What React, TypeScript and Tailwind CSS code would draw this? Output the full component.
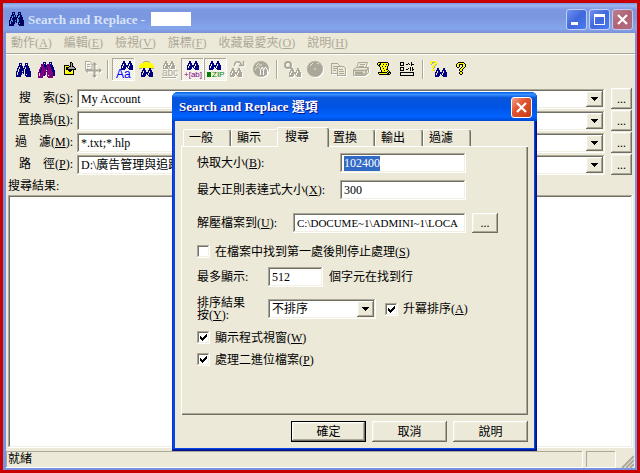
import React, { useEffect, useRef } from "react";
import clsx from "clsx";

const raised = "bg-[#ece9d8] shadow-[inset_-1px_-1px_#716f64,inset_1px_1px_#fff,inset_-2px_-2px_#aca899,inset_2px_2px_#f1efe2]";
const sunken = "bg-white shadow-[inset_-1px_-1px_#fff,inset_1px_1px_#aca899,inset_-2px_-2px_#f1efe2,inset_2px_2px_#716f64]";

const NAVY = "#000080";
const GRAY = "#aca899";

const BIG = [
  "...XXX...XXX...",
  "...X.X...X.X...",
  "...XXX...XXX...",
  "..XXXXX.XXXXX..",
  "..X.XXX.X.XXX..",
  ".XX.XXXXX.XXXX.",
  ".X.XXXXX.XXXXX.",
  ".X.XXXXX.XXXXX.",
  "XX.XXX.X.XXXXXX",
  "X.XXXXXX.XXXXXX",
  "X.XXXX.X.XXXXXX",
  "X.XXXX...X.XXXX",
  "XXXXX....XXXXXX",
  "XXXXX.....XXXXX",
];

const SMALL = [
  "..XX....XX..",
  "..XX....XX..",
  ".XXXX..XXXX.",
  ".X.XX..X.XX.",
  "XX.XXXXX.XXX",
  "X.XXXXX.XXXX",
  "X.XXX.X.XXXX",
  "XXXXX..XXXXX",
  "XXXX....XXXX",
];

const QUESTION = [
  "..kkkkkk..",
  ".kyyyyyyk.",
  "kyykkkkyyk",
  "kyyk..kyyk",
  "kyyk..kyyk",
  ".kk..kyyk.",
  "....kyyk..",
  "...kyyk...",
  "...kyyk...",
  "....kk....",
  "...kyyk...",
  "...kyyk...",
  "....kk....",
];

const QUESTION_SMALL = [
  ".yyyyy.",
  "yygggyy",
  "yyg..yy",
  ".g..yyg",
  "...yyg.",
  "..yyg..",
  "..yyg..",
  "...g...",
  "..yy...",
  "..yyg..",
];

const SCROLL = [
  ".kkkkkkkkkk...",
  "kyykyyyyyyyk..",
  "kykkyykyykyk..",
  ".kkyyyyyyyyk..",
  "..kyykyykyk...",
  "...kyyyyyyk...",
  "...kyykyyyk...",
  "...kyyyyykk...",
  "....kyykyyyk..",
  "....kyyyyykyk.",
  ".kkkkkkkkkykkk",
  ".kyyyyyyyykkyk",
  "..kkkkkkkkkkk.",
];

const PAGE_PIN = [
  "......kk....",
  "......kwk...",
  "......kwk...",
  "kkkkk.kwk...",
  "kyyyykkwkk..",
  "kykkkwwwwwk.",
  "kykkwwwwwwwk",
  "kykkkkkkkkkk",
  "kyyykkkkyk..",
  "kyyyykkyyk..",
  "kyyyyyyyyk..",
  "kyyyyyyyyk..",
  "kkkkkkkkkk..",
];

const WHOLE_WORD = [
  ".....ggggg.....",
  "....gyyyyyg....",
  "..yyyyyyyyyyy..",
  ".yyyyyyyyyyyyy.",
  "yyyyyyyyyyyyyyy",
  "yyyyyyyyyyyyyyy",
  "yyyyyyyyyyyyyyy",
  "ggg.........ggg",
];

const COLORS: Record<string, string> = { k: "#000", y: "#ffff00", w: "#a8a8a0", g: "#aca880" };

interface PixelsProps {
  rows: string[];
  x?: number;
  y?: number;
  color?: string;
}

const Pixels: React.FC<PixelsProps> = ({ rows, x = 0, y = 0, color = "#000" }) => (
  <g shapeRendering="crispEdges">
    {rows.flatMap((row, j) =>
      [...row].map((c, i) =>
        c === "." ? null : <rect key={`${i}-${j}`} x={x + i} y={y + j} width="1" height="1" fill={COLORS[c] ?? color} />
      )
    )}
  </g>
);

// disabled glyphs get a white copy one pixel down and right
const Etched: React.FC<{ children: (color: string) => React.ReactNode }> = ({ children }) => (
  <>
    <g transform="translate(1 1)">{children("#fff")}</g>
    {children(GRAY)}
  </>
);

const Caption: React.FC<{ x: number; y: number; color: string; size?: number; children: string }> = ({ x, y, color, size = 9, children }) => (
  <text x={x} y={y} fill={color} fontSize={size} fontFamily="Liberation Sans, sans-serif">{children}</text>
);

interface Tool {
  name: string;
  pressed?: boolean;
  disabled?: boolean;
  icon: React.ReactNode;
}

const groups: Tool[][] = [
  [
    { name: "Search", icon: <Pixels rows={BIG} x={4} y={5} color={NAVY} /> },
    {
      name: "Replace",
      icon: <><Pixels rows={BIG} x={5} y={4} color={NAVY} /><Pixels rows={BIG} x={3} y={6} color="#800080" /></>,
    },
    { name: "Open", icon: <Pixels rows={PAGE_PIN} x={6} y={4} /> },
    {
      name: "Move",
      disabled: true,
      icon: (
        <Etched>
          {(c) => (
            <g fill="none" stroke={c}>
              <path d="M4 3.5h5l2 2v6H4.5v-8M6 6.5h3M6 8.5h3" />
              <path d="M13.5 5v14M6 12.5h14" strokeWidth="2" />
              <path d="M11 7l2.5-3L16 7zM11 17l2.5 3 2.5-3zM7 10l-3 2.5L7 15zM18 10l3 2.5-3 2.5z" fill={c} stroke="none" />
            </g>
          )}
        </Etched>
      ),
    },
  ],
  [
    {
      name: "Case sensitive",
      pressed: true,
      icon: <><Pixels rows={SMALL} x={9} y={3} color={NAVY} /><Caption x={4} y={20} size={12} color="#0000ff">Aa</Caption></>,
    },
    {
      name: "Whole word",
      icon: <><Pixels rows={WHOLE_WORD} x={4} y={3} /><Pixels rows={SMALL} x={6} y={10} color={NAVY} /></>,
    },
    {
      name: "Regular expression",
      disabled: true,
      icon: (
        <Etched>
          {(c) => (
            <>
              <Pixels rows={SMALL.slice(0, 8)} x={5} y={3} color={c} />
              <Caption x={4} y={18} size={10} color={c}>abc</Caption>
              <path d="M4 19.5h14" stroke={c} />
            </>
          )}
        </Etched>
      ),
    },
    {
      name: "Expression replace",
      pressed: true,
      icon: <><Pixels rows={SMALL} x={6} y={3} color={NAVY} /><Caption x={3} y={19} size={8} color="#800080">+[ab]</Caption></>,
    },
    {
      name: "Search ZIP",
      pressed: true,
      icon: (
        <>
          <Pixels rows={SMALL} x={5} y={3} color={NAVY} />
          <path d="M3 14h4v5H3z" fill="#008000" />
          <Caption x={8} y={19} size={8} color="#008000">ZIP</Caption>
        </>
      ),
    },
    {
      name: "Subfolders",
      disabled: true,
      icon: (
        <Etched>
          {(c) => (
            <>
              <Pixels rows={SMALL} x={3} y={10} color={c} />
              <path d="M7.5 8c0-6 6-5 7-1M16.5 3v4.5H12" fill="none" stroke={c} strokeWidth="1.5" />
            </>
          )}
        </Etched>
      ),
    },
    {
      name: "HTML",
      disabled: true,
      icon: (
        <>
          <circle cx="12" cy="12" r="8" fill="#fff" />
          <circle cx="11" cy="11" r="8" fill={GRAY} />
          <path d="M6 8l3-3M9 7h3M5 12c2-4 4-4 5-1" fill="none" stroke="#ece9d8" />
          <path d="M10.5 17v-5l2-3 1 3 2-3 2 3v5M13.5 12v5" fill="none" stroke="#fff" />
        </>
      ),
    },
  ],
  [
    {
      name: "Find next",
      disabled: true,
      icon: (
        <Etched>
          {(c) => (
            <>
              <circle cx="7" cy="7" r="3" fill="none" stroke={c} strokeWidth="2" />
              <path d="M9 9l3 3" stroke={c} strokeWidth="2" />
              <Pixels rows={SMALL} x={8} y={10} color={c} />
            </>
          )}
        </Etched>
      ),
    },
    {
      name: "Stop",
      disabled: true,
      icon: (
        <>
          <circle cx="12" cy="12" r="8" fill="#fff" />
          <circle cx="11" cy="11" r="8" fill={GRAY} />
          <path d="M6 8l3-3M13 5l2 1M10 11h2" stroke="#ece9d8" />
        </>
      ),
    },
    {
      name: "Copy",
      disabled: true,
      icon: (
        <Etched>
          {(c) => (
            <g fill="#ece9d8" stroke={c} shapeRendering="crispEdges">
              <path d="M4.5 5.5h6l2 2v8h-8z" />
              <path d="M6 8.5h4M6 10.5h4M6 12.5h3" />
              <path d="M10.5 8.5h6l2 2v7h-8z" />
              <path d="M12 11.5h4M12 13.5h5M12 15.5h5" />
            </g>
          )}
        </Etched>
      ),
    },
    {
      name: "Print",
      disabled: true,
      icon: (
        <Etched>
          {(c) => (
            <g fill="#ece9d8" stroke={c}>
              <path d="M8.5 4.5h9l-2 6h-9zM10 6.5h5M9 8.5h5" />
              <path d="M3.5 11.5l3-2h12v5l-3 3h-12z" />
              <path d="M4 12.5h12l2-2M16 13v4M5 14.5h8M5 16h10" strokeWidth="1.5" />
            </g>
          )}
        </Etched>
      ),
    },
    { name: "Script", icon: <Pixels rows={SCROLL} x={4} y={4} /> },
    {
      name: "Options",
      icon: (
        <g fill="none" stroke="#000" shapeRendering="crispEdges">
          <path d="M4.5 4.5h3v3h-3zM4.5 9.5h3v3h-3zM4.5 14.5h13v3h-13z" />
          <path d="M10 6.5h2M12 5.5h1M13 6.5h1M15 4v4M16 6.5h2M10 11.5h2M12 10.5h1M14 9v4M16 9v4M17 11.5h1" />
        </g>
      ),
    },
  ],
  [
    {
      name: "Search help",
      icon: <><Pixels rows={QUESTION_SMALL} x={3} y={3} /><Pixels rows={SMALL} x={8} y={10} color={NAVY} /></>,
    },
    { name: "Help", icon: <Pixels rows={QUESTION} x={6} y={4} /> },
  ],
];

const ToolButton: React.FC<Tool> = ({ name, pressed, disabled, icon }) => (
  <button
    type="button"
    aria-label={name}
    aria-pressed={pressed}
    disabled={disabled}
    className={clsx(
      "h-[23px] w-[23px]",
      pressed && "bg-[repeating-conic-gradient(#fff_0_25%,#ece9d8_0_50%)] bg-size-[2px_2px] shadow-[inset_-1px_-1px_#fff,inset_1px_1px_#aca899]"
    )}
  >
    <svg viewBox="0 0 23 23" className="h-[23px] w-[23px]">{icon}</svg>
  </button>
);

const Label: React.FC<{ text: string; hot: string; end?: string }> = ({ text, hot, end }) => (
  <>{text}(<u>{hot}</u>){end}</>
);

const Arrow = () => (
  <svg viewBox="0 0 7 4" className="h-1 w-[7px]" shapeRendering="crispEdges"><path d="M0 0h7v1H6v1H5v1H4v1H3V3H2V2H1V1H0z" /></svg>
);

const Cross = () => (
  <svg viewBox="0 0 11 11" className="h-[11px] w-[11px]"><path d="M1 1l9 9M10 1l-9 9" stroke="#fff" strokeWidth="2.2" /></svg>
);

interface ComboRowProps {
  id: string;
  text: string;
  hot: string;
  value: string;
}

const ComboRow: React.FC<ComboRowProps> = ({ id, text, hot, value }) => (
  <div className="flex h-[22px] items-start">
    <label htmlFor={id} className="w-[67px] text-right leading-5 whitespace-nowrap">
      <Label text={text} hot={hot} end=":" />
    </label>
    <div className={clsx("mt-px ml-1 flex h-5 min-w-0 flex-1 p-0.5", sunken)}>
      <input id={id} defaultValue={value} className="min-w-0 flex-1 px-0.5 outline-none" />
      <button type="button" aria-label={`${text} list`} className={clsx("flex w-[17px] items-center justify-center", raised)}><Arrow /></button>
    </div>
    <button type="button" aria-label={`${text} browse`} className={clsx("mr-[3px] ml-1.5 h-[21px] w-[21px]", raised)}>...</button>
  </div>
);

interface CheckProps {
  text: string;
  hot: string;
  checked?: boolean;
}

const Check: React.FC<CheckProps> = ({ text, hot, checked }) => (
  <label className="flex h-[13px] items-center gap-[5px] whitespace-nowrap">
    <span className="grid">
      <input type="checkbox" defaultChecked={checked} className={clsx("peer h-[13px] w-[13px] appearance-none [grid-area:1/1]", sunken)} />
      <svg viewBox="0 0 13 13" className="pointer-events-none hidden h-[13px] w-[13px] [grid-area:1/1] peer-checked:block" shapeRendering="crispEdges">
        <path d="M3 5h1v1h1v1h1V6h1V5h1V4h1V3h1v3H9v1H8v1H7v1H6v1H5V9H4V8H3z" />
      </svg>
    </span>
    <span><Label text={text} hot={hot} /></span>
  </label>
);

const menus = [
  ["動作", "A"],
  ["編輯", "E"],
  ["檢視", "V"],
  ["旗標", "F"],
  ["收藏最愛夾", "O"],
  ["說明", "H"],
];

const tabs = ["一般", "顯示", "搜尋", "置換", "輸出", "過濾"];

const field = clsx("h-5 px-1 outline-none", sunken);

const OptionsDialog = () => {
  const cache = useRef<HTMLInputElement>(null);

  useEffect(() => {
    cache.current?.focus();
    cache.current?.select();
  }, []);

  return (
    <section
      role="dialog"
      aria-label="Search and Replace 選項"
      className="absolute top-[92px] left-[172px] flex w-[365px] flex-col rounded-t-md bg-[#0a46e0] px-[3px] pb-[3px] shadow-[inset_-1px_-1px_#00138c,inset_1px_0_#0831d9,inset_-2px_-2px_#001ea0]"
    >
      <header className="-mx-[3px] flex h-[29px] items-center justify-between rounded-t-md bg-linear-[#0058e6_0%,#3a93ff_8%,#0855dd_20%,#0054e3_50%,#0062ff_85%,#0048d0_100%] pr-[5px] pl-[7px]">
        <h2 className="text-[13px] font-bold text-white [text-shadow:1px_1px_#0f1089]">Search and Replace 選項</h2>
        <button type="button" aria-label="Close" className="mt-0.5 flex h-[21px] w-[21px] items-center justify-center rounded-[3px] border border-white bg-linear-[135deg,#f0a088,#e25430_40%,#c83c14]"><Cross /></button>
      </header>

      <div className="bg-[#ece9d8] px-1.5 pt-1.5 pb-1.5">
        <div role="tablist" className="flex h-[19px] items-end pl-0.5">
          {tabs.map((tab) => (
            <button
              key={tab}
              type="button"
              role="tab"
              aria-selected={tab === "搜尋"}
              className={clsx(
                "rounded-t-xs border-t border-l border-white bg-[#ece9d8] text-left",
                tab === "搜尋"
                  ? "z-10 -mr-0.5 -mb-px -ml-0.5 h-5 w-[52px] pb-0.5 pl-[7px] shadow-[inset_-1px_0_#716f64,inset_-2px_0_#aca899]"
                  : "h-[17px] w-12 pl-[5px] shadow-[inset_-1px_0_#716f64,inset_-2px_0_#aca899]"
              )}
            >
              {tab}
            </button>
          ))}
        </div>

        <form
          onSubmit={(e) => e.preventDefault()}
          className="h-[269px] border-t border-l border-white px-[15px] pt-1.5 shadow-[inset_-1px_-1px_#716f64,inset_-2px_-2px_#aca899]"
        >
          <div className="flex items-center">
            <label htmlFor="cache" className="w-[143px]"><Label text="快取大小" hot="B" end=":" /></label>
            <input id="cache" ref={cache} defaultValue="102400" className={clsx(field, "w-[126px] selection:bg-[#316ac5] selection:text-white")} />
          </div>
          <div className="mt-[7px] flex items-center">
            <label htmlFor="regex" className="w-[143px]"><Label text="最大正則表達式大小" hot="X" end=":" /></label>
            <input id="regex" defaultValue="300" className={clsx(field, "w-[126px]")} />
          </div>
          <div className="mt-[13px] flex items-center">
            <label htmlFor="unzip" className="w-24"><Label text="解壓檔案到" hot="U" end=":" /></label>
            <input id="unzip" defaultValue="C:\DOCUME~1\ADMINI~1\LOCA" className={clsx(field, "w-[173px] text-[11px]")} />
            <button type="button" aria-label="Browse" className={clsx("ml-1.5 h-5 w-[26px]", raised)}>...</button>
          </div>
          <div className="mt-3"><Check text="在檔案中找到第一處後則停止處理" hot="S" /></div>
          <div className="mt-[9px] flex items-center">
            <label htmlFor="max" className="w-[71px]">最多顯示:</label>
            <input id="max" defaultValue="512" className={clsx(field, "w-[55px]")} />
            <span className="ml-1.5">個字元在找到行</span>
          </div>
          <div className="mt-2.5 flex h-6 items-center">
            <label htmlFor="sort" className="w-[71px] leading-3">排序結果<br /><Label text="按" hot="Y" end=":" /></label>
            <div className={clsx("relative mr-[9px] h-5 w-[108px] p-0.5", sunken)}>
              <select id="sort" className="h-4 w-full appearance-none pl-0.5 outline-none">
                <option>不排序</option>
              </select>
              <span className={clsx("pointer-events-none absolute top-0.5 right-0.5 flex h-4 w-[17px] items-center justify-center", raised)}><Arrow /></span>
            </div>
            <Check text="升冪排序" hot="A" checked />
          </div>
          <div className="mt-2.5 flex flex-col gap-[9px]">
            <Check text="顯示程式視窗" hot="W" checked />
            <Check text="處理二進位檔案" hot="P" checked />
          </div>
        </form>

        <div className="mt-1.5 flex justify-end gap-1.5">
          <button type="button" className={clsx("h-[21px] w-[75px] border border-black", raised)}>確定</button>
          <button type="button" className={clsx("h-[21px] w-[75px]", raised)}>取消</button>
          <button type="button" className={clsx("h-[21px] w-[75px]", raised)}>說明</button>
        </div>
      </div>
    </section>
  );
};

export default function App() {
  return (
    <div className="relative flex h-screen flex-col bg-[#c80000] p-[3px] font-['Liberation_Serif','Noto_Sans_CJK_TC',serif] text-[12px] leading-4 text-black">
      <main className="flex min-h-0 flex-1 flex-col bg-[#7a90e0] pr-0.5 pb-0.5 pl-[3px]">
        <header className="-mr-0.5 -ml-[3px] flex h-[30px] items-center bg-linear-[#7a96df_0%,#9bb8f0_8%,#7b97e0_22%,#7b97e0_50%,#85a6ea_85%,#7a90d8_100%] pt-1 pr-1 pl-1.5">
          <svg viewBox="0 0 15 14" className="mb-0.5 h-3.5 w-[15px]">
            <Pixels rows={BIG} color="#000060" />
            <path d="M5 3h1v2H5zM10 3h1v2h-1zM3 8h1v2H3zM9 7h1v3H9z" fill="#00b8c8" />
          </svg>
          <h1 className="ml-1 text-[13px] font-bold whitespace-nowrap text-[#d8e4f8]">Search and Replace -</h1>
          <span className="mb-0.5 ml-1.5 h-3.5 w-10 bg-white" />
          <div className="ml-auto flex gap-0.5 pb-px">
            <button type="button" aria-label="Minimize" className="flex h-[21px] w-[21px] items-end rounded-[3px] border border-[#c0d0f8] bg-linear-[135deg,#7090f0,#3f68dc_50%,#4c7cf0] pb-1 pl-1">
              <span className="h-[3px] w-[7px] bg-white" />
            </button>
            <button type="button" aria-label="Maximize" className="flex h-[21px] w-[21px] items-center justify-center rounded-[3px] border border-[#c0d0f8] bg-linear-[135deg,#7090f0,#3f68dc_50%,#4c7cf0]">
              <span className="h-[11px] w-[11px] border border-t-3 border-white" />
            </button>
            <button type="button" aria-label="Close" className="flex h-[21px] w-[21px] items-center justify-center rounded-[3px] border border-[#c8c8ec] bg-linear-[135deg,#b88090,#b06474_50%,#b06c80]"><Cross /></button>
          </div>
        </header>

        <div className="flex min-h-0 flex-1 flex-col bg-[#ece9d8]">
          <nav className="flex h-[21px] gap-3 border-b border-[#aca899] pl-[5px]">
            {menus.map(([text, hot]) => (
              <button key={hot} type="button" disabled className="whitespace-nowrap text-[#aca899]"><Label text={text} hot={hot} /></button>
            ))}
          </nav>

          <div className="flex border-t border-white pt-[3px] pb-[7px] pl-1.5">
            {groups.map((group, i) => (
              <div key={group[0].name} className="flex">
                {i > 0 && <span className="mx-[3px] my-0.5 w-0.5 border-r border-l border-r-white border-l-[#aca899]" />}
                {group.map((tool) => <ToolButton key={tool.name} {...tool} />)}
              </div>
            ))}
          </div>

          <ComboRow id="find" text="搜　索" hot="S" value="My Account" />
          <ComboRow id="replace" text="置換爲" hot="R" value="" />
          <ComboRow id="mask" text="過　濾" hot="M" value="*.txt;*.hlp" />
          <ComboRow id="path" text="路　徑" hot="P" value="D:\廣告管理與追蹤" />

          <h2 className="pt-0.5 pl-0.5 leading-[17px]">搜尋結果:</h2>
          <div className={clsx("mr-0.5 ml-0.5 min-h-0 flex-1", sunken)} />

          <footer className="mt-[3px] flex h-[17px] gap-[3px]">
            <p className="flex-1 pl-0.5 shadow-[inset_-1px_-1px_#fff,inset_1px_1px_#aca899]">就緒</p>
            <p className="w-[30px] shadow-[inset_-1px_-1px_#fff,inset_1px_1px_#aca899]" />
            <svg viewBox="0 0 15 17" className="mr-px h-[17px] w-[15px] self-end" fill="none">
              <path d="M2 17L15 4M6 17l9-9M10 17l5-5" stroke="#fff" />
              <path d="M3 17L15 5M7 17l8-8M11 17l4-4" stroke="#aca899" strokeWidth="2" />
            </svg>
          </footer>
        </div>
      </main>

      <OptionsDialog />
    </div>
  );
}
